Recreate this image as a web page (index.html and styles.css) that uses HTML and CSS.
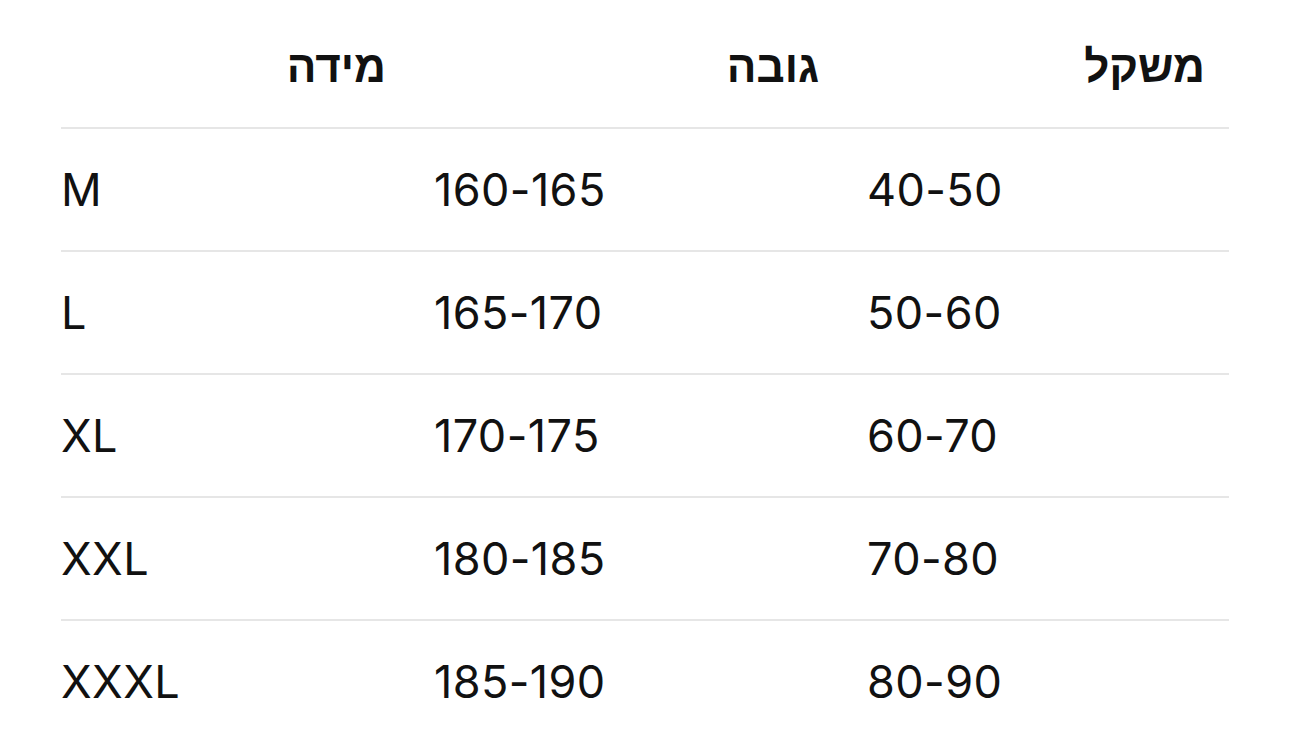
FILE: index.html
```html
<!DOCTYPE html>
<html lang="he" dir="rtl">
<head>
<meta charset="utf-8">
<title>טבלת מידות</title>
<link rel="stylesheet" href="styles.css">
</head>
<body>
<table class="sizes">
  <colgroup>
    <col class="col-weight">
    <col class="col-height">
    <col class="col-size">
  </colgroup>
  <thead>
    <tr>
      <th>משקל</th>
      <th>גובה</th>
      <th>מידה</th>
    </tr>
  </thead>
  <tbody>
    <tr><td>40-50</td><td>160-165</td><td>M</td></tr>
    <tr><td>50-60</td><td>165-170</td><td>L</td></tr>
    <tr><td>60-70</td><td>170-175</td><td>XL</td></tr>
    <tr><td>70-80</td><td>180-185</td><td>XXL</td></tr>
    <tr><td>80-90</td><td>185-190</td><td>XXXL</td></tr>
  </tbody>
</table>
</body>
</html>
```
FILE: styles.css
```css
html, body {
  margin: 0;
  padding: 0;
  background: #ffffff;
}

body {
  padding: 6px 61px 0 0;
  width: 1229px;
  box-sizing: border-box;
}

.sizes {
  margin-right: 0;
  margin-left: 61px;
  width: 1168px;
  border-collapse: collapse;
  table-layout: fixed;
  color: #111111;
}

.col-weight { width: 386px; }
.col-height { width: 433px; }
.col-size { width: 349px; }

.sizes th,
.sizes td {
  height: 121px;
  padding: 0 24px;
  vertical-align: middle;
  border-bottom: 2px solid #e6e6e6;
}

.sizes th:last-child,
.sizes td:last-child {
  padding-left: 0;
}

.sizes th {
  text-align: right;
  font-family: "Liberation Sans", "DejaVu Sans", sans-serif;
  font-weight: 700;
  font-size: 44px;
}

.sizes td {
  direction: ltr;
  text-align: left;
  font-family: Inter, "Liberation Sans", sans-serif;
  font-weight: 400;
  font-size: 45px;
  letter-spacing: 0.4px;
}
```
